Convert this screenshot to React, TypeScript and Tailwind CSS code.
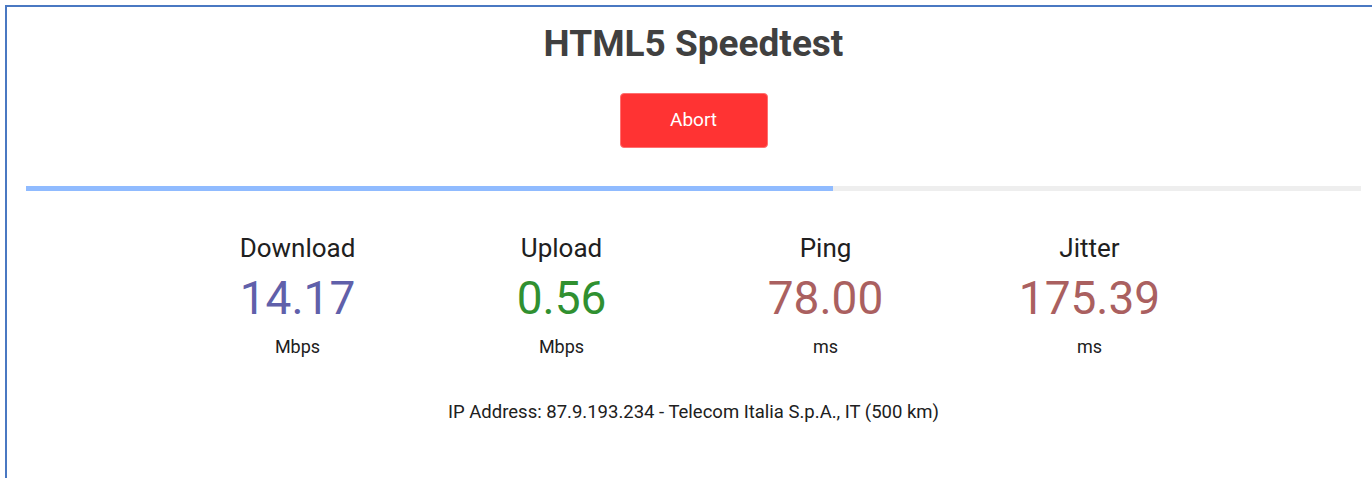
import React from 'react';

type Meter = { label: string; value: string; unit: string; color: string };

const meters: Meter[] = [
  { label: 'Download', value: '14.17', unit: 'Mbps', color: 'text-[#6060aa]' },
  { label: 'Upload', value: '0.56', unit: 'Mbps', color: 'text-[#309030]' },
  { label: 'Ping', value: '78.00', unit: 'ms', color: 'text-[#aa6060]' },
  { label: 'Jitter', value: '175.39', unit: 'ms', color: 'text-[#aa6060]' },
];

const progress = 0.6042;

export default function App() {
  return (
    <div className="h-[478px] w-[1372px] overflow-hidden bg-white font-['Roboto','Liberation_Sans',sans-serif]">
      <div className="mt-[5px] ml-[5px] h-[480px] w-[1375px] border-t-2 border-l-2 border-t-[#4a78c2] border-l-[#4a78c2] bg-white">
        <h1 className="mt-[15px] text-center text-[37px] leading-[44px] font-bold text-[#404040]">
          HTML5 Speedtest
        </h1>

        <div className="mt-[27px] flex justify-center">
          <button className="h-[55px] w-[148px] rounded-[4px] border border-[#ff7070] bg-[#ff3333] text-[19px] text-white">
            Abort
          </button>
        </div>

        <div className="mx-[19px] mt-[38px] h-[5px] bg-[#eeeeee]">
          <div className="h-full bg-[#90bbff]" style={{ width: `${progress * 100}%` }} />
        </div>

        <div className="mt-[42px] flex justify-center">
          {meters.map((m) => (
            <div key={m.label} className="flex w-[264px] flex-col items-center">
              <div className="text-[26px] leading-[30px] text-[#202020]">{m.label}</div>
              <div className={`mt-[8px] text-[46px] leading-[54px] ${m.color}`}>{m.value}</div>
              <div className="mt-[10px] text-[18px] leading-[24px] text-[#202020]">{m.unit}</div>
            </div>
          ))}
        </div>

        <div className="mt-[40px] text-center text-[18.5px] leading-[26px] text-[#202020]">
          IP Address: 87.9.193.234 - Telecom Italia S.p.A., IT (500 km)
        </div>
      </div>
    </div>
  );
}
